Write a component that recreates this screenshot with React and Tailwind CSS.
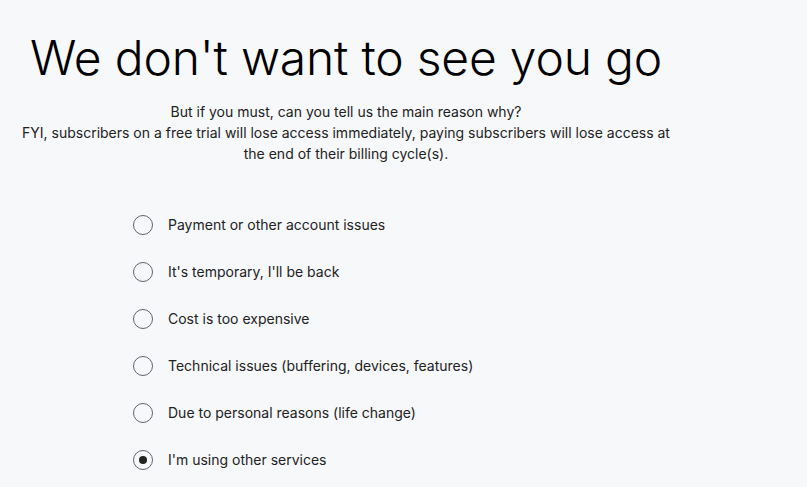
import React, { useState } from "react";

const options = [
  "Payment or other account issues",
  "It's temporary, I'll be back",
  "Cost is too expensive",
  "Technical issues (buffering, devices, features)",
  "Due to personal reasons (life change)",
  "I'm using other services",
];

export default function App() {
  const [sel, setSel] = useState(5);
  return (
    <div
      className="min-h-[487px] w-full bg-[#f7f8fa] text-[#1f1f1f]"
      style={{ fontFamily: "Inter, 'Noto Sans', sans-serif" }}
    >
      <div className="w-[692px] pt-[34px] flex flex-col items-center text-center">
        <h1 className="text-[48px] leading-[48px] font-light tracking-[-0.2px] text-[#000]">
          We don't want to see you go
        </h1>
        <div className="mt-[19px] w-[660px] text-[14px] leading-[21px] text-[#222]">
          <p>But if you must, can you tell us the main reason why?</p>
          <p>
            FYI, subscribers on a free trial will lose access immediately, paying subscribers will lose access at the end of their billing cycle(s).
          </p>
        </div>
      </div>
      <div className="mt-[37px] ml-[133px] flex flex-col">
        {options.map((o, i) => (
          <label key={o} className="flex h-[47px] cursor-pointer items-center gap-[15px]" onClick={() => setSel(i)}>
            <span className="flex h-[20px] w-[20px] items-center justify-center rounded-full border border-[#5d6473] bg-[#f7f8fa]">
              {sel === i && <span className="h-[8px] w-[8px] rounded-full bg-[#222]" />}
            </span>
            <span className="text-[14px] text-[#222]">{o}</span>
          </label>
        ))}
      </div>
    </div>
  );
}
